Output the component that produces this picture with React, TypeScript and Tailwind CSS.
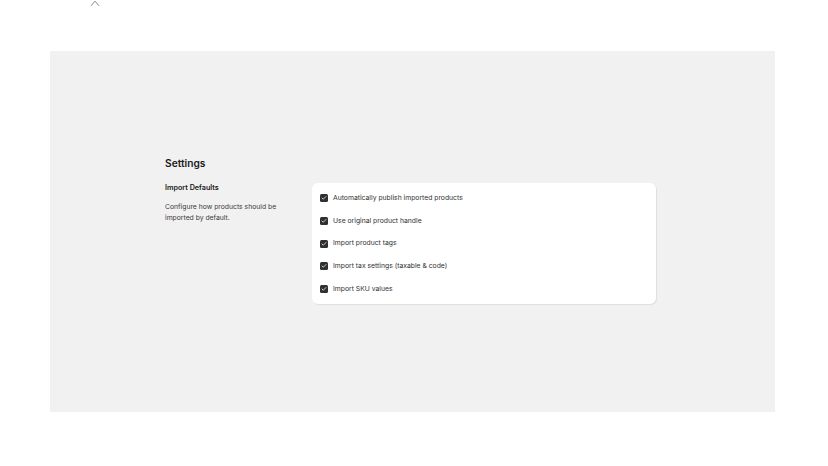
import { Check } from "lucide-react";

const options = [
  "Automatically publish imported products",
  "Use original product handle",
  "Import product tags",
  "Import tax settings (taxable & code)",
  "Import SKU values",
];

export default function App() {
  return (
    <div className="min-h-screen bg-white font-['Inter',sans-serif] text-[#1a1a1a]">
      {/* Top strip with collapse toggle */}
      <div className="flex h-[51px] items-start pl-[90px]">
        <svg width="10" height="7" viewBox="0 0 10 7" fill="none" className="text-[#8a8a8a]">
          <polyline points="1,5.8 5,1.2 9,5.8" stroke="currentColor" strokeWidth="1" />
        </svg>
      </div>

      {/* Settings panel */}
      <div className="ml-[50px] mr-[53px] flex h-[361px] items-center justify-center bg-[#f1f1f1] pr-[4px]">
        <div className="-mt-[3px] w-[491px]">
          <h1 className="text-[10.2px] font-semibold leading-[14px]">Settings</h1>

          <div className="mt-[13px] flex">
            <div className="w-[147px] shrink-0">
              <h2 className="text-[7.2px] font-semibold leading-[10px]">Import Defaults</h2>
              <p className="mt-[8px] w-[116px] text-[6.8px] leading-[11px] text-[#3a3a3a]">
                Configure how products should be imported by default.
              </p>
            </div>

            <div className="flex-1 rounded-[6px] bg-white px-[8px] py-[9px] shadow-[1px_1px_1px_rgba(0,0,0,0.08)]">
              <ul className="flex flex-col gap-[10px]">
                {options.map((label) => (
                  <li key={label} className="flex h-[12.7px] items-center gap-[5px]">
                    <span className="flex h-[8px] w-[8px] items-center justify-center rounded-[1.5px] bg-[#303030]">
                      <Check className="h-[6px] w-[6px] text-white" strokeWidth={3} />
                    </span>
                    <span className="text-[6.8px] text-[#303030]">{label}</span>
                  </li>
                ))}
              </ul>
            </div>
          </div>
        </div>
      </div>
    </div>
  );
}
